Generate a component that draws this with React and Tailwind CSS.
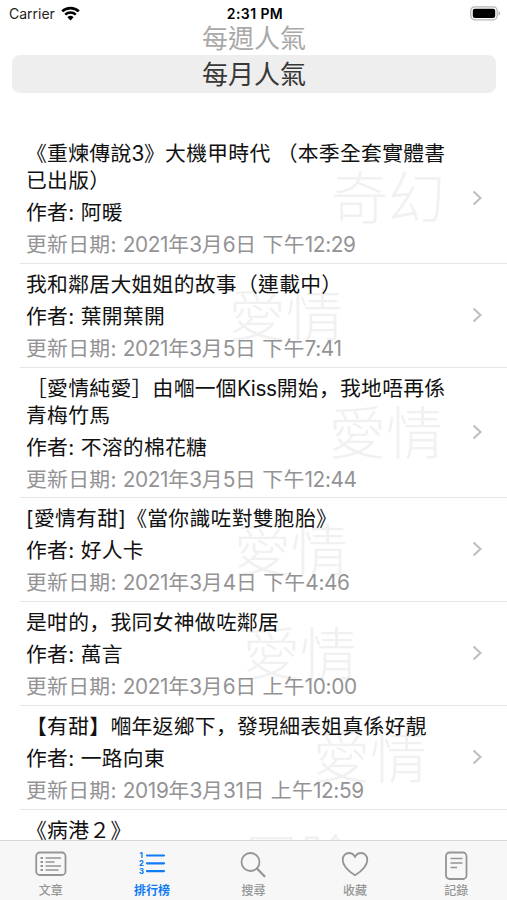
import clsx from "clsx";

const novels = [
  {
    id: 1,
    title: ["《重煉傳說3》大機甲時代 （本季全套實體書", "已出版）"],
    author: "阿暖",
    updated: "2021年3月6日 下午12:29",
    category: "奇幻",
    width: "w-[419px]",
  },
  {
    id: 2,
    title: ["我和鄰居大姐姐的故事（連載中）"],
    author: "葉開葉開",
    updated: "2021年3月5日 下午7:41",
    category: "愛情",
    width: "w-[317px]",
  },
  {
    id: 3,
    title: ["［愛情純愛］由嗰一個Kiss開始，我地唔再係", "青梅竹馬"],
    author: "不溶的棉花糖",
    updated: "2021年3月5日 下午12:44",
    category: "愛情",
    width: "w-[417px]",
  },
  {
    id: 4,
    title: ["[愛情有甜]《當你識咗對雙胞胎》"],
    author: "好人卡",
    updated: "2021年3月4日 下午4:46",
    category: "愛情",
    width: "w-[322px]",
  },
  {
    id: 5,
    title: ["是咁的，我同女神做咗鄰居"],
    author: "萬言",
    updated: "2021年3月6日 上午10:00",
    category: "愛情",
    width: "w-[331px]",
  },
  {
    id: 6,
    title: ["【有甜】嗰年返鄉下，發現細表姐真係好靚"],
    author: "一路向東",
    updated: "2019年3月31日 上午12:59",
    category: "愛情",
    width: "w-[401px]",
  },
  {
    id: 7,
    title: ["《病港２》"],
    category: "冒險",
    width: "w-[331px]",
  },
];

function StatusBar() {
  return (
    <header className="grid h-[27px] shrink-0 grid-cols-3 items-center pr-[6px] pl-[9px] text-[14px] leading-none text-[#222]">
      <div className="flex items-center gap-[6px]">
        <span>Carrier</span>
        <svg width="19" height="15" viewBox="0 0 19 15" fill="none" stroke="#000">
          <path d="M1.2 5.4a12 12 0 0 1 16.6 0" strokeWidth="2.7" />
          <path d="M4.2 8.7a7.7 7.7 0 0 1 10.6 0" strokeWidth="2.5" />
          <path d="M9.5 14.4 6.4 11.2a4.6 4.6 0 0 1 6.2 0z" fill="#000" stroke="none" />
        </svg>
      </div>
      <span className="text-center text-[14px] font-semibold tracking-[0.4px] text-black">2:31 PM</span>
      <svg className="justify-self-end" width="31" height="15" viewBox="0 0 31 15">
        <rect x="0.8" y="0.8" width="26.4" height="13" rx="4" fill="#fff" stroke="#b5b5b5" strokeWidth="1.3" />
        <rect x="2.8" y="2.7" width="22.4" height="9.2" rx="2" fill="#000" />
        <path d="M28.6 5v4.6c1-.4 1.6-1.3 1.6-2.3S29.6 5.4 28.6 5z" fill="#aaa" />
      </svg>
    </header>
  );
}

function PeriodPicker() {
  return (
    <div className="flex shrink-0 flex-col pr-[11px] pl-3 text-center text-[26px]">
      <div className="h-7 leading-[23px] text-[#a9a9a9]">每週人氣</div>
      <div className="h-[38px] rounded-[8px] bg-[#eeeeee] pt-px leading-[38px] text-[#383838]">每月人氣</div>
    </div>
  );
}

function Chevron() {
  return (
    <svg className="mb-[3px]" width="11" height="16" viewBox="0 0 11 16" fill="none" stroke="#bfbfc1" strokeWidth="2.1">
      <path d="M1.5 1.5 8.5 8l-7 6.5" />
    </svg>
  );
}

// números y letras latinas más juntos, y la coma abajo a la izquierda
function MixedText({ children }) {
  return children.split(/([0-9A-Za-z:]+|，)/).map((part, i) => {
    if (part === "，") {
      return (
        <span key={i} className="font-['Noto_Sans_CJK_SC',sans-serif] leading-none">
          {part}
        </span>
      );
    }
    if (/^[0-9A-Za-z]/.test(part)) {
      return (
        <span key={i} className="tracking-[-0.4px]">
          {part}
        </span>
      );
    }
    return part;
  });
}

function NovelRow({ novel }) {
  return (
    <li className="ml-5 flex shrink-0 items-center justify-between border-b border-[#e5e5e6] pt-[7px] pr-[24px] pb-[4.8px] pl-[6px]">
      <div
        className={clsx(
          "relative flex min-h-[91px] flex-col gap-[5px] leading-[27px] tracking-[0.3px] whitespace-pre",
          novel.width
        )}
      >
        {/* género como marca de agua */}
        <span className="absolute top-1/2 right-0 -mt-px -translate-y-1/2 text-[57px] leading-[57px] font-light tracking-normal text-[#f1f1f1]">
          {novel.category}
        </span>
        <div className="relative">
          {novel.title.map((line) => (
            <p key={line}>
              <MixedText>{line}</MixedText>
            </p>
          ))}
        </div>
        {novel.author && <p className="relative">作者: {novel.author}</p>}
        {novel.updated && (
          <p className="relative text-[#939395]">
            更新日期: <MixedText>{novel.updated}</MixedText>
          </p>
        )}
      </div>
      <Chevron />
    </li>
  );
}

function ArticlesIcon() {
  return (
    <svg width="32" height="26" viewBox="0 0 32 26" fill="none" stroke="currentColor" strokeWidth="1.5">
      <rect x="1.2" y="1.5" width="29.3" height="22.5" rx="3.5" strokeWidth="1.8" />
      <path d="M10.5 7H26M10.5 11h9M10.5 15H26M10.5 19h13" />
      <path d="M5.5 7H8M5.5 11H8M5.5 15H8M5.5 19H8" strokeWidth="2" />
    </svg>
  );
}

function RankingIcon() {
  return (
    <svg width="28" height="26" viewBox="0 0 28 26" fill="none" stroke="currentColor" strokeWidth="2.2">
      <path d="M9 4.5h17M9 12.3h17M9 20.1h17" strokeLinecap="round" />
      <g fill="currentColor" stroke="none" fontSize="7.5" fontWeight="800">
        <text x="1.5" y="7">1</text>
        <text x="1" y="15">2</text>
        <text x="1" y="23">3</text>
      </g>
    </svg>
  );
}

function SearchIcon() {
  return (
    <svg width="26" height="28" viewBox="0 0 26 28" fill="none" stroke="currentColor" strokeWidth="1.8">
      <circle cx="10.5" cy="11" r="9" />
      <path d="m17 17.5 7.500 7.800" strokeWidth="2.2" strokeLinecap="round" />
    </svg>
  );
}

function HeartIcon() {
  return (
    <svg width="28" height="26" viewBox="0 0 28 26" fill="none" stroke="currentColor" strokeWidth="1.8">
      <path d="M14 24.3C8.5 20.8 1.7 15.2 1.7 8.7 1.7 4.7 4.5 2 7.9 2c2.7 0 4.8 1.4 6.1 3.9C15.3 3.4 17.4 2 20.1 2c3.4 0 6.2 2.7 6.2 6.7 0 6.5-6.8 12.1-12.3 15.6z" />
    </svg>
  );
}

function RecordIcon() {
  return (
    <svg width="23" height="30" viewBox="0 0 23 30" fill="none" stroke="currentColor" strokeWidth="1.5">
      <rect x="1" y="1.5" width="20.5" height="26.5" rx="3.5" strokeWidth="1.8" />
      <path d="M5.5 7.5h12M5.5 12h12M5.5 16.5H12" />
    </svg>
  );
}

const tabs = [
  { label: "文章", Icon: ArticlesIcon },
  { label: "排行榜", Icon: RankingIcon, active: true },
  { label: "搜尋", Icon: SearchIcon },
  { label: "收藏", Icon: HeartIcon },
  { label: "記錄", Icon: RecordIcon },
];

function TabBar() {
  return (
    <nav className="grid h-[60px] shrink-0 grid-cols-5 border-t border-[#d8d8d8] bg-[#f7f7f7]">
      {tabs.map(({ label, Icon, active }) => (
        <button
          key={label}
          className={clsx(
            "flex flex-col items-center text-[12px] leading-[16px]",
            active ? "font-bold text-[#0f7bf5]" : "font-medium text-[#959595]"
          )}
        >
          <span className="flex h-[42px] items-start pt-[10px]">
            <Icon />
          </span>
          {label}
        </button>
      ))}
    </nav>
  );
}

export default function App() {
  return (
    <div className="flex h-[900px] w-[507px] flex-col overflow-hidden bg-white font-['Inter','Noto_Sans_CJK_TC',sans-serif] text-[20.8px] text-[#111]">
      <StatusBar />
      <PeriodPicker />
      <main className="min-h-0 flex-1 overflow-hidden pt-[40px]">
        <ul className="flex flex-col">
          {novels.map((novel) => (
            <NovelRow key={novel.id} novel={novel} />
          ))}
        </ul>
      </main>
      <TabBar />
    </div>
  );
}
